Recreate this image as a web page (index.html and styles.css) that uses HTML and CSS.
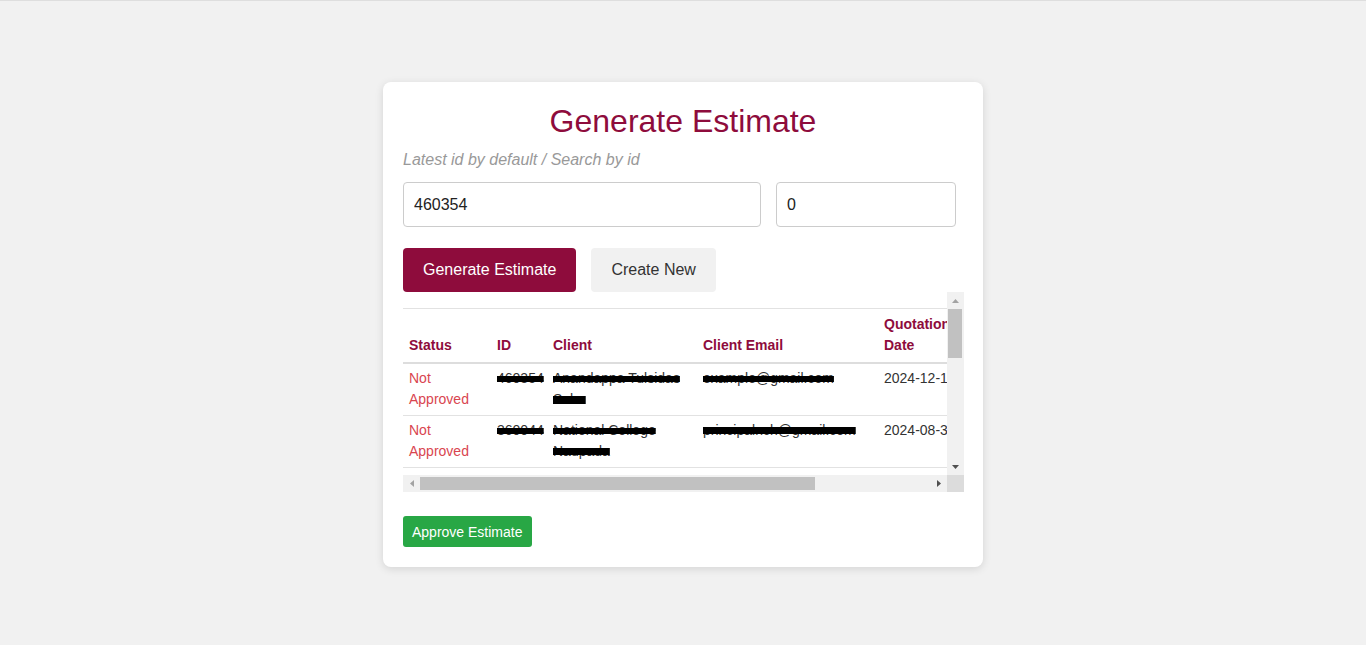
FILE: index.html
```html
<!DOCTYPE html>
<html lang="en">
<head>
<meta charset="utf-8">
<title>Generate Estimate</title>
<link rel="stylesheet" href="styles.css">
</head>
<body>
<main class="card">
  <h1 class="title">Generate Estimate</h1>
  <p class="hint">Latest id by default / Search by id</p>
  <div class="inputs">
    <input class="field field-id" type="text" value="460354">
    <input class="field field-rev" type="text" value="0">
  </div>
  <div class="actions">
    <button class="btn btn-primary">Generate Estimate</button>
    <button class="btn btn-light">Create New</button>
  </div>
  <div class="table-frame">
    <div class="viewport">
      <table class="grid">
        <thead>
          <tr>
            <th class="c-status">Status</th>
            <th class="c-id">ID</th>
            <th class="c-client">Client</th>
            <th class="c-email">Client Email</th>
            <th class="c-date">Quotation Date</th>
            <th class="c-amount">Total Amount</th>
          </tr>
        </thead>
        <tbody>
          <tr>
            <td class="status">Not Approved</td>
            <td><span class="redact">460354</span></td>
            <td><span class="redact">Anandappa Tulsidas</span><br><span class="redact low">Sahu</span></td>
            <td><span class="redact">example@gmail.com</span></td>
            <td>2024-12-18</td>
            <td>12500.00</td>
          </tr>
          <tr>
            <td class="status">Not Approved</td>
            <td><span class="redact">360044</span></td>
            <td><span class="redact">National College</span><br><span class="redact high">Naupada</span></td>
            <td><span class="redact high">principalnch@gmail.com</span></td>
            <td>2024-08-30</td>
            <td>8400.00</td>
          </tr>
          <tr>
            <td class="status">Not Approved</td>
            <td><span class="redact">360012</span></td>
            <td><span class="redact">Sunrise Public</span><br><span class="redact">School</span></td>
            <td><span class="redact">info@gmail.com</span></td>
            <td>2024-08-12</td>
            <td>6200.00</td>
          </tr>
          <tr>
            <td class="status">Not Approved</td>
            <td><span class="redact">359870</span></td>
            <td><span class="redact">Green Valley</span><br><span class="redact">Traders</span></td>
            <td><span class="redact">contact@gmail.com</span></td>
            <td>2024-07-28</td>
            <td>15300.00</td>
          </tr>
        </tbody>
      </table>
    </div>
    <div class="vbar">
      <span class="sb-btn">
        <svg width="7" height="4" viewBox="0 0 7 4"><path d="M0 4L3.5 0L7 4z" fill="#a3a3a3"/></svg>
      </span>
      <span class="vtrack"><span class="vthumb"></span></span>
      <span class="sb-btn">
        <svg width="7" height="4" viewBox="0 0 7 4"><path d="M0 0L3.5 4L7 0z" fill="#505050"/></svg>
      </span>
    </div>
    <div class="hbar">
      <span class="sb-btn">
        <svg width="4" height="7" viewBox="0 0 4 7"><path d="M4 0L0 3.5L4 7z" fill="#a3a3a3"/></svg>
      </span>
      <span class="htrack"><span class="hthumb"></span></span>
      <span class="sb-btn">
        <svg width="4" height="7" viewBox="0 0 4 7"><path d="M0 0L4 3.5L0 7z" fill="#505050"/></svg>
      </span>
    </div>
    <div class="corner"></div>
  </div>
  <div class="footer-actions">
    <button class="btn btn-success">Approve Estimate</button>
  </div>
</main>
</body>
</html>
```

FILE: styles.css
```css
html, body {
  margin: 0;
  padding: 0;
}

body {
  background: #f1f1f1;
  border-top: 1px solid #dedede;
  min-height: 644px;
  box-sizing: border-box;
  padding-top: 81px;
  display: flex;
  justify-content: center;
  align-items: flex-start;
  font-family: "Liberation Sans", Arial, sans-serif;
  color: #333;
}

.card {
  width: 600px;
  box-sizing: border-box;
  background: #fff;
  border-radius: 8px;
  box-shadow: 0 2px 8px rgba(0, 0, 0, 0.12);
  padding: 20px;
}

.title {
  margin: 0 0 11px;
  padding-top: 1px;
  font-size: 32px;
  font-weight: normal;
  line-height: 37px;
  text-align: center;
  color: #8e0c3c;
}

.hint {
  margin: 0 0 13px;
  font-size: 16px;
  line-height: 18px;
  font-style: italic;
  color: #999;
}

.inputs {
  display: flex;
  gap: 15px;
}

.field {
  height: 45px;
  box-sizing: border-box;
  border: 1px solid #ccc;
  border-radius: 4px;
  padding: 0 10px;
  font-family: "Liberation Sans", Arial, sans-serif;
  font-size: 16px;
  color: #222;
  background: #fff;
}

.field-id { width: 358px; }
.field-rev { width: 180px; }

.actions {
  display: flex;
  gap: 15px;
  margin-top: 21px;
}

.btn {
  border: none;
  font-family: "Liberation Sans", Arial, sans-serif;
  cursor: pointer;
}

.btn-primary,
.btn-light {
  height: 44px;
  padding: 0 20px;
  font-size: 16px;
  border-radius: 4px;
}

.btn-primary {
  background: #8e0c3c;
  color: #fff;
}

.btn-light {
  background: #f1f1f1;
  color: #333;
}

/* table with drawn scrollbars */
.table-frame {
  display: grid;
  grid-template-columns: 544px 17px;
  grid-template-rows: 183px 17px;
  width: 561px;
}

.viewport {
  overflow: hidden;
}

.grid {
  width: 702px;
  table-layout: fixed;
  border-collapse: collapse;
  margin-top: 16px;
  font-size: 14px;
  line-height: 21px;
}

.grid th {
  text-align: left;
  vertical-align: bottom;
  color: #8e0c3c;
  font-weight: bold;
  padding: 5px 6px 6px;
  border-top: 1px solid #e2e2e2;
  border-bottom: 2px solid #dddddd;
  white-space: normal;
}

.grid td {
  vertical-align: top;
  padding: 4px 6px 5px;
  border-bottom: 1px solid #e2e2e2;
  color: #333;
  white-space: nowrap;
  overflow: hidden;
}

.c-status { width: 76px; }
.c-id { width: 44px; }
.c-client { width: 138px; }
.c-email { width: 169px; }
.c-date { width: 92px; }
.c-amount { width: 123px; }

.grid td.status {
  color: #d9454f;
  white-space: normal;
}

.redact {
  text-decoration: line-through;
  text-decoration-color: #000;
  text-decoration-thickness: 6px;
  text-decoration-skip-ink: none;
}

.redact.low { text-decoration-thickness: 8px; }
.redact.high { text-decoration-thickness: 7px; }

.vbar {
  display: flex;
  flex-direction: column;
  background: #f1f1f1;
}

.hbar {
  display: flex;
  background: #f1f1f1;
}

.sb-btn {
  flex: 0 0 17px;
  width: 17px;
  height: 17px;
  display: flex;
  align-items: center;
  justify-content: center;
}

.vtrack {
  flex: 1;
  display: flex;
  flex-direction: column;
  padding: 0 2px 0 1px;
}

.vthumb {
  height: 49px;
  background: #c1c1c1;
}

.htrack {
  flex: 1;
  display: flex;
  padding: 2px 0 2px;
}

.hthumb {
  width: 395px;
  background: #c1c1c1;
}

.corner {
  background: #dcdcdc;
}

.footer-actions {
  margin-top: 24px;
  display: flex;
}

.btn-success {
  height: 31px;
  padding: 0 9px;
  font-size: 14px;
  border-radius: 3px;
  background: #28a745;
  color: #fff;
  white-space: nowrap;
}
```
